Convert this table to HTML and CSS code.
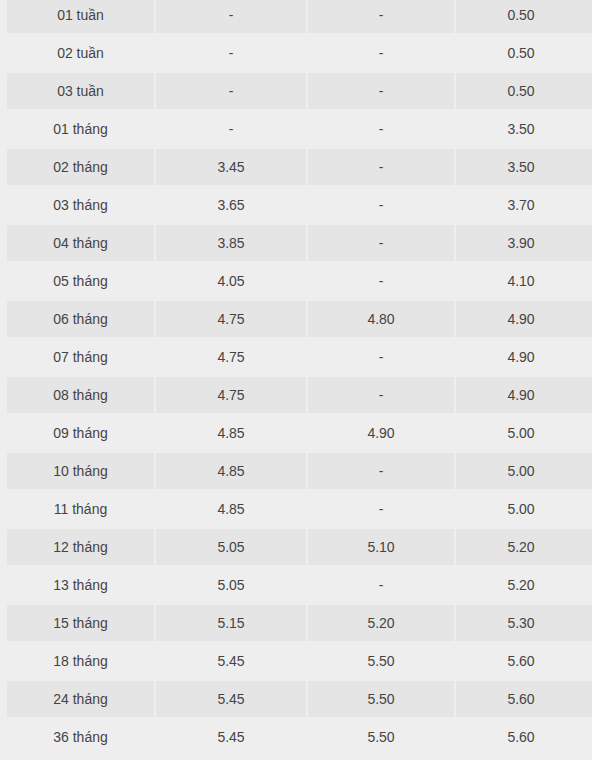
FILE: index.html
```html
<!DOCTYPE html>
<html lang="vi">
<head>
<meta charset="utf-8">
<title>Lãi suất</title>
<link rel="stylesheet" href="styles.css">
</head>
<body>
<table class="rates">
<colgroup>
<col class="c1"><col class="c2"><col class="c3"><col class="c4">
</colgroup>
<tbody>
<tr><td>01 tuần</td><td>-</td><td>-</td><td class="last">0.50</td></tr>
<tr><td>02 tuần</td><td>-</td><td>-</td><td class="last">0.50</td></tr>
<tr><td>03 tuần</td><td>-</td><td>-</td><td class="last">0.50</td></tr>
<tr><td>01 tháng</td><td>-</td><td>-</td><td class="last">3.50</td></tr>
<tr><td>02 tháng</td><td>3.45</td><td>-</td><td class="last">3.50</td></tr>
<tr><td>03 tháng</td><td>3.65</td><td>-</td><td class="last">3.70</td></tr>
<tr><td>04 tháng</td><td>3.85</td><td>-</td><td class="last">3.90</td></tr>
<tr><td>05 tháng</td><td>4.05</td><td>-</td><td class="last">4.10</td></tr>
<tr><td>06 tháng</td><td>4.75</td><td>4.80</td><td class="last">4.90</td></tr>
<tr><td>07 tháng</td><td>4.75</td><td>-</td><td class="last">4.90</td></tr>
<tr><td>08 tháng</td><td>4.75</td><td>-</td><td class="last">4.90</td></tr>
<tr><td>09 tháng</td><td>4.85</td><td>4.90</td><td class="last">5.00</td></tr>
<tr><td>10 tháng</td><td>4.85</td><td>-</td><td class="last">5.00</td></tr>
<tr><td>11 tháng</td><td>4.85</td><td>-</td><td class="last">5.00</td></tr>
<tr><td>12 tháng</td><td>5.05</td><td>5.10</td><td class="last">5.20</td></tr>
<tr><td>13 tháng</td><td>5.05</td><td>-</td><td class="last">5.20</td></tr>
<tr><td>15 tháng</td><td>5.15</td><td>5.20</td><td class="last">5.30</td></tr>
<tr><td>18 tháng</td><td>5.45</td><td>5.50</td><td class="last">5.60</td></tr>
<tr><td>24 tháng</td><td>5.45</td><td>5.50</td><td class="last">5.60</td></tr>
<tr><td>36 tháng</td><td>5.45</td><td>5.50</td><td class="last">5.60</td></tr>
</tbody>
</table>
</body>
</html>
```
FILE: styles.css
```css
html, body {
  margin: 0;
  padding: 0;
  overflow: hidden;
  background: #efeeef;
}
body {
  width: 592px;
  height: 760px;
  font-family: "Liberation Sans", Arial, sans-serif;
  font-size: 14px;
  color: #444;
}
.rates {
  border-collapse: separate;
  border-spacing: 2px;
  margin: -5px 0 0 5px;
  table-layout: fixed;
  width: 591px;
}
.c1 { width: 147px; }
.c2 { width: 150px; }
.c3 { width: 146px; }
.c4 { width: 140px; }
.rates td {
  height: 36px;
  padding: 0;
  text-align: center;
  vertical-align: middle;
  line-height: 16px;
}
.rates td.last {
  padding-right: 10px;
}
.rates tr:nth-child(odd) td {
  background: #e6e5e6;
}
```
